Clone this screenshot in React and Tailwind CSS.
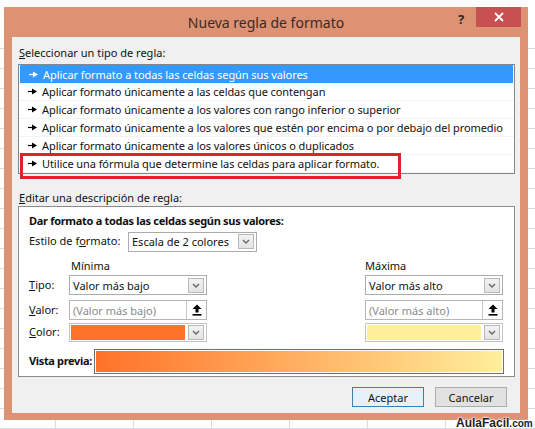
const F = "font-['Segoe_UI','Noto_Sans',sans-serif]";

function Arrow({ white }) {
  return (
    <svg width="10" height="7" viewBox="0 0 10 7" className="shrink-0">
      <path d="M0 3.5H4.5" stroke={white ? "#fff" : "#000"} strokeWidth="1.2" />
      <path d="M4 0.5L9 3.5L4 6.5Z" fill={white ? "#fff" : "#000"} />
    </svg>
  );
}

function DropBtn() {
  return (
    <div className="w-[16px] h-[15px] border border-[#b9b9b9] bg-[linear-gradient(#f3f3f3,#e3e3e3)] flex items-center justify-center shrink-0">
      <svg width="8" height="5" viewBox="0 0 8 5">
        <path d="M1 1L4 4L7 1" fill="none" stroke="#666" strokeWidth="1.4" />
      </svg>
    </div>
  );
}

function UpBtn() {
  return (
    <div className="w-[20px] h-full border-l border-[#c8c8c8] bg-white flex items-center justify-center shrink-0">
      <svg width="10" height="12" viewBox="0 0 10 12">
        <path d="M5 0.5L9.5 5H6.5V8.5H3.5V5H0.5Z" fill="#000" />
        <rect x="0.5" y="10" width="9" height="1.6" fill="#000" />
      </svg>
    </div>
  );
}

function Select({ text, w = "w-[138px]" }) {
  return (
    <div className={`${w} h-[20px] border border-[#acacac] bg-white flex items-center pl-[3px] pr-[2px] justify-between`}>
      <span className="text-[11px] text-[#111] leading-none whitespace-nowrap">{text}</span>
      <DropBtn />
    </div>
  );
}

function ValueInput({ text }) {
  return (
    <div className="w-[138px] h-[20px] border border-[#b5b5b5] bg-white flex items-center justify-between">
      <span className="pl-[3px] text-[11px] text-[#8a8a8a] leading-none whitespace-nowrap">{text}</span>
      <UpBtn />
    </div>
  );
}

function ColorSel({ color }) {
  return (
    <div className="w-[138px] h-[19px] border border-[#c3c3c3] bg-white flex items-center pr-[2px] gap-[2px]">
      <div className={`flex-1 h-full border border-white ${color}`} />
      <DropBtn />
    </div>
  );
}

const items = [
  "Aplicar formato a todas las celdas según sus valores",
  "Aplicar formato únicamente a las celdas que contengan",
  "Aplicar formato únicamente a los valores con rango inferior o superior",
  "Aplicar formato únicamente a los valores que estén por encima o por debajo del promedio",
  "Aplicar formato únicamente a los valores únicos o duplicados",
  "Utilice una fórmula que determine las celdas para aplicar formato.",
];

export default function App() {
  return (
    <div className={`relative w-[535px] h-[429px] overflow-hidden bg-white ${F}`}>
      {/* spreadsheet behind */}
      <div className="absolute left-0 right-0 top-[48px] bottom-0 bg-[image:linear-gradient(to_bottom,#dadada_1px,transparent_1px),linear-gradient(to_right,#dadada_1px,transparent_1px)] bg-[size:78px_20px] bg-[position:55px_0]" />

      {/* dialog window */}
      <div className="absolute left-[4px] top-[7px] w-[524px] h-[413px] bg-[#DD9274] flex flex-col px-[8px] pb-[7px]">
        <div className="relative h-[30px] shrink-0 flex items-center justify-center">
          <span className="text-[14px] text-[#3a2a24]">Nueva regla de formato</span>
          <span className="absolute left-[446px] top-[3px] text-[13px] font-bold text-[#2a2a2a]">?</span>
          <div className="absolute right-[-1px] top-0 w-[45px] h-[20px] bg-[#C75050] flex items-center justify-center">
            <svg width="10" height="10" viewBox="0 0 10 10">
              <path d="M1 1L9 9M9 1L1 9" stroke="#fff" strokeWidth="1.8" />
            </svg>
          </div>
        </div>

        <div className="flex-1 bg-[#F0F0F0] flex flex-col px-[6px] text-[11px] text-[#111]">
          <div className="pt-[8px] h-[24px] leading-[16px] pl-[1px]">
            <span className="underline">S</span>eleccionar un tipo de regla:
          </div>

          <div className="relative mt-[3px] w-[497px] border border-[#828790] bg-white">
            {items.map((t, i) => (
              <div
                key={i}
                className={`h-[18px] flex items-center gap-[4px] pl-[9px] leading-none tracking-[-0.07px] ${
                  i === 0 ? "bg-[#3399FF] text-white mx-[1px] pl-[8px]" : "border-b border-[#f3f3f3]"
                }`}
              >
                <Arrow white={i === 0} />
                <span className="whitespace-nowrap">{t}</span>
              </div>
            ))}
            <div className="absolute left-[1px] top-[88px] w-[381px] h-[26px] border-[3px] border-[#E0222A]" />
          </div>

          <div className="mt-[16px] h-[16px] leading-[16px] pl-[1px]">
            <span className="underline">E</span>ditar una descripción de regla:
          </div>

          <div className="w-[497px] h-[171px] border border-[#8c8c8c] bg-white flex flex-col pl-[10px]">
            <div className="mt-[6px] h-[16px] leading-[16px] font-bold whitespace-nowrap tracking-[-0.3px]">
              Dar formato a todas las celdas según sus valores:
            </div>
            <div className="mt-[3px] flex items-center h-[19px]">
              <span className="w-[99px] whitespace-nowrap">
                Estilo de f<span className="underline">o</span>rmato:
              </span>
              <Select text="Escala de 2 colores" w="w-[129px]" />
            </div>
            <div className="mt-[7px] h-[16px] leading-[16px] flex">
              <span className="ml-[42px] w-[294px]">Mínima</span>
              <span>Máxima</span>
            </div>
            <div className="mt-[1px] flex items-center h-[20px]">
              <span className="w-[40px]">
                <span className="underline">T</span>ipo:
              </span>
              <Select text="Valor más bajo" />
              <div className="w-[158px]" />
              <Select text="Valor más alto" />
            </div>
            <div className="mt-[5px] flex items-center h-[20px]">
              <span className="w-[40px]">
                <span className="underline">V</span>alor:
              </span>
              <ValueInput text="(Valor más bajo)" />
              <div className="w-[158px]" />
              <ValueInput text="(Valor más alto)" />
            </div>
            <div className="mt-[3px] flex items-center h-[19px]">
              <span className="w-[40px]">
                <span className="underline">C</span>olor:
              </span>
              <ColorSel color="bg-[#FF7128]" />
              <div className="w-[158px]" />
              <ColorSel color="bg-[#FFEF9C]" />
            </div>
            <div className="mt-[7px] flex items-center h-[25px]">
              <span className="w-[65px] shrink-0 font-bold whitespace-nowrap tracking-[-0.35px]">Vista previa:</span>
              <div className="w-[410px] h-full border border-[#6e6e6e] p-[1px] bg-white">
                <div className="w-full h-full bg-[linear-gradient(to_right,#FF7128,#FFEF9C)]" />
              </div>
            </div>
          </div>

          <div className="mt-[10px] flex justify-end gap-[11px] pr-[7px]">
            <button className="w-[72px] h-[20px] border border-[#3C7FB1] bg-[#E5F1FB] text-[11px] leading-none text-[#111]">
              Aceptar
            </button>
            <button className="w-[72px] h-[20px] border border-[#ADADAD] bg-[#E1E1E1] text-[11px] leading-none text-[#111]">
              Cancelar
            </button>
          </div>
        </div>
      </div>

      {/* watermark */}
      <div className="absolute left-[456px] top-[415px] font-['Liberation_Sans',sans-serif] font-bold text-[#1e1e1e] leading-[13px] whitespace-nowrap [text-shadow:0_0_2px_#fff,0_0_2px_#fff,0_0_3px_#fff]">
        <span className="text-[12px]">AulaFacil</span>
        <span className="text-[10px]">.com</span>
      </div>
    </div>
  );
}
